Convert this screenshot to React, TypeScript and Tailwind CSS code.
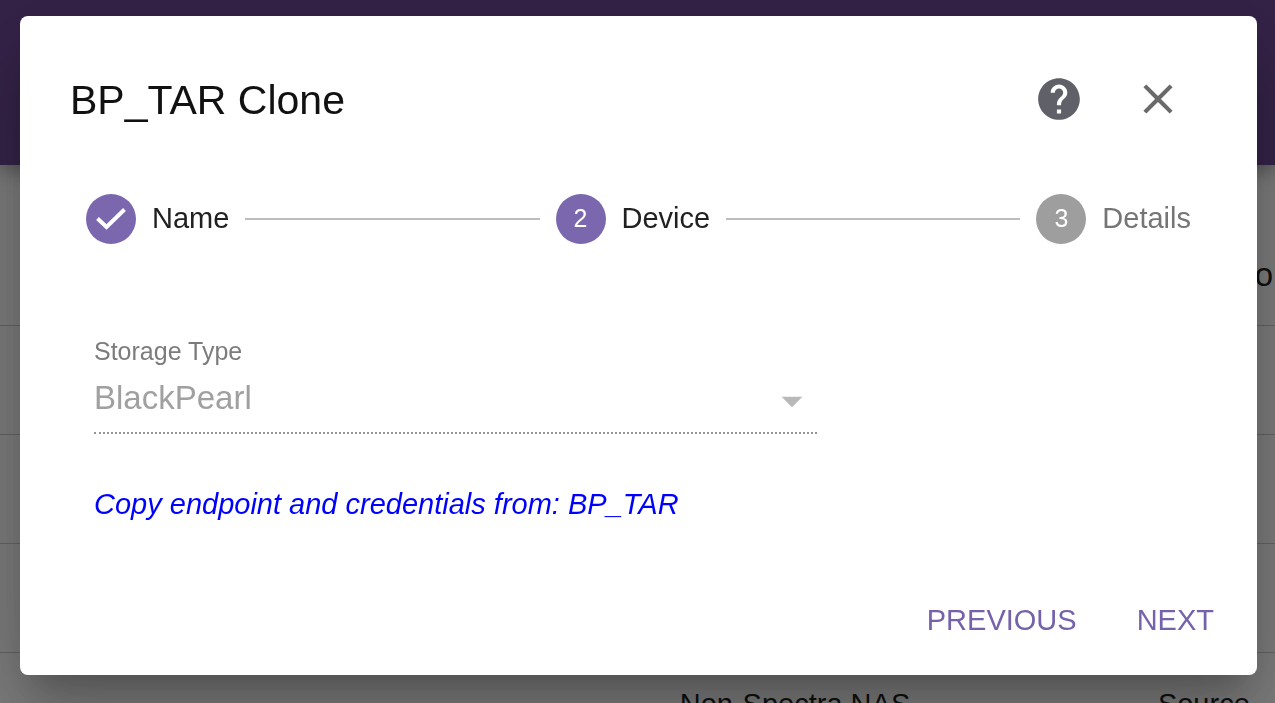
import React from 'react';
import { MdArrowDropDown, MdClose, MdHelp } from 'react-icons/md';

type StepState = 'done' | 'active' | 'pending';

interface StepItem {
  label: string;
  state: StepState;
}

const steps: StepItem[] = [
  { label: 'Name', state: 'done' },
  { label: 'Device', state: 'active' },
  { label: 'Details', state: 'pending' },
];

const rows = [
  { type: '', role: '' },
  { type: '', role: '' },
  { type: '', role: '' },
  { type: 'Non-Spectra NAS', role: 'Source' },
];

const Backdrop: React.FC = () => (
  <div className="h-screen overflow-hidden bg-[#fafafa]" aria-hidden="true">
    <header className="relative h-[165px] bg-[#6a4690] shadow-[0_4px_20px_rgba(0,0,0,0.4)]" />
    <table className="mt-[51px] w-full table-fixed text-left text-[29px] text-black/90">
      <thead>
        <tr className="h-[109px] border-b border-black/20">
          <th className="w-[53%]" />
          <th className="w-[37.5%]" />
          <th className="pt-2 pr-[2px] text-right text-[33px] font-normal">o</th>
        </tr>
      </thead>
      <tbody>
        {rows.map((row, index) => (
          <tr key={index} className="h-[109px] border-b border-black/20">
            <td />
            <td className="pb-1 pl-1">{row.type}</td>
            <td className="pb-1 pl-1">{row.role}</td>
          </tr>
        ))}
      </tbody>
    </table>
  </div>
);

const CheckMark: React.FC = () => (
  <svg viewBox="0 0 50 50" className="size-[50px]" fill="none" stroke="currentColor" strokeWidth="4" aria-hidden="true">
    <path d="M11.5 24.5 20.5 33 38.5 15.5" />
  </svg>
);

const Step: React.FC<{ item: StepItem; number: number }> = ({ item, number }) => (
  <li className="flex items-center gap-4" aria-current={item.state === 'active' ? 'step' : undefined}>
    <span
      className={`flex size-[50px] items-center justify-center rounded-full text-[25px] text-white ${
        item.state === 'pending' ? 'bg-[#9e9e9e]' : 'bg-[#7b67ae]'
      }`}
    >
      {item.state === 'done' ? <CheckMark /> : number}
    </span>
    <span className={`text-[29px] leading-[46px] pb-[3px] ${item.state === 'pending' ? 'text-[#757575]' : 'text-[#212121]'}`}>
      {item.label}
    </span>
  </li>
);

const Stepper: React.FC = () => (
  <ol className="mt-[70px] flex items-center gap-4 px-[66px]">
    {steps.map((item, index) => (
      <React.Fragment key={item.label}>
        {index > 0 && <li role="presentation" className="h-[2px] flex-1 bg-[#bdbdbd]" />}
        <Step item={item} number={index + 1} />
      </React.Fragment>
    ))}
  </ol>
);

const CloneDialog: React.FC = () => (
  <div
    role="dialog"
    aria-modal="true"
    aria-labelledby="dialog-title"
    className="w-full rounded-lg bg-white pb-[26px] shadow-[0_23px_31px_-14px_rgba(0,0,0,0.2),0_49px_78px_6px_rgba(0,0,0,0.14),0_18px_95px_16px_rgba(0,0,0,0.12)]"
  >
    <div className="flex items-center pt-[58px] pr-[74px] pl-[50px]">
      <h2 id="dialog-title" className="flex-1 text-[41px] leading-[48px] pt-[2px] text-[#111111]">BP_TAR Clone</h2>
      <button type="button" aria-label="Help" className="mr-[49px] text-[#5f6068]">
        <MdHelp className="size-[50px]" />
      </button>
      <button type="button" aria-label="Close" className="text-[#6a6a6a]">
        <MdClose className="size-[50px]" />
      </button>
    </div>

    <Stepper />

    <form className="mt-[90px] px-[74px]">
      <label htmlFor="storage-type" className="block text-[25px] leading-[34px] text-[#7c7c7c]">Storage Type</label>
      <div className="relative w-[723px] max-w-full border-b-2 border-dotted border-[#949494]">
        <select
          id="storage-type"
          disabled
          className="block h-[64px] w-full appearance-none bg-transparent pb-1 text-[33px] text-[#a0a0a0] opacity-100"
        >
          <option>BlackPearl</option>
        </select>
        <MdArrowDropDown className="pointer-events-none absolute top-2 right-0 size-[50px] text-[#b8b8b8]" />
      </div>
      <a href="#credentials" className="mt-[50px] block w-fit text-[29px] leading-[40px] text-[#0000ff] italic">
        Copy endpoint and credentials from: BP_TAR
      </a>
    </form>

    <div className="mt-[67px] flex justify-end gap-[60px] pr-[43px] text-[29px] leading-[58px] text-[#7562ab]">
      <button type="button">PREVIOUS</button>
      <button type="button">NEXT</button>
    </div>
  </div>
);

const App: React.FC = () => {
  return (
    <div className="font-['Liberation_Sans',Arial,sans-serif]">
      <Backdrop />
      <div className="fixed inset-0 overflow-hidden bg-black/50 pt-4 pr-[18px] pl-5">
        <CloneDialog />
      </div>
    </div>
  );
};

export default App;
